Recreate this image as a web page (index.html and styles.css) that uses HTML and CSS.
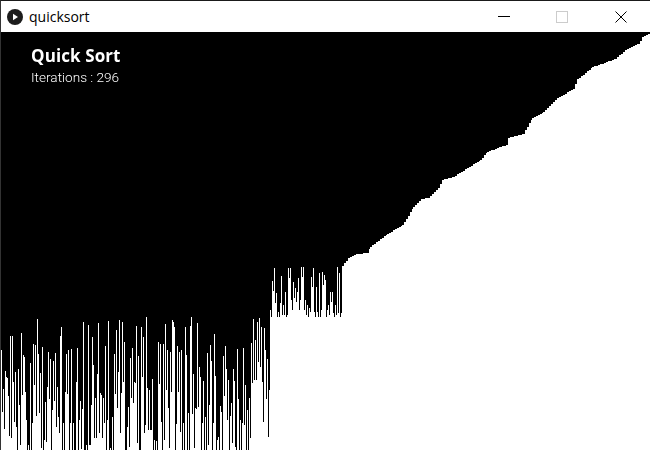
FILE: index.html
```html
<!DOCTYPE html>
<html lang="en">
<head>
    <meta charset="UTF-8">
    <title>quicksort</title>
    <link rel="stylesheet" href="styles.css">
</head>
<body>
    <div class="window">
        <div class="titlebar">
            <svg class="app-icon" width="16" height="16" viewBox="0 0 16 16">
                <circle cx="8" cy="8" r="8" fill="#1c1c1c"/>
                <path d="M6 4.8 L11 8 L6 11.2 Z" fill="#fff"/>
            </svg>
            <span class="title">quicksort</span>
            <div class="controls">
                <div class="control">
                    <svg width="12" height="12" viewBox="0 0 12 12"><path d="M0 5.5 H12" stroke="#000" fill="none"/></svg>
                </div>
                <div class="control control-max">
                    <svg width="12" height="12" viewBox="0 0 12 12"><rect x="0.5" y="0.5" width="11" height="11" stroke="#ccc" fill="none"/></svg>
                </div>
                <div class="control">
                    <svg width="12" height="12" viewBox="0 0 12 12"><path d="M0.5 0.5 L11.5 11.5 M11.5 0.5 L0.5 11.5" stroke="#000" fill="none"/></svg>
                </div>
            </div>
        </div>
        <div class="stage">
            <canvas id="sketch" width="649" height="418"></canvas>
            <div class="info">
                <div class="info-title">Quick Sort</div>
                <div class="info-count">Iterations : 296</div>
            </div>
        </div>
    </div>
    <script src="sketch.js"></script>
</body>
</html>
```

FILE: styles.css
```css
body {
    margin: 0;
    background-color: #fff;
    font-family: "Open Sans", "Noto Sans", sans-serif;
    overflow: hidden;
}
.window {
    width: 649px;
    height: 449px;
    border-top: 1px solid #1a1a1a;
    border-left: 1px solid #333;
    display: flex;
    flex-direction: column;
}
.titlebar {
    height: 31px;
    display: flex;
    align-items: center;
    background-color: #fff;
    padding-left: 6px;
}
.app-icon {
    margin-right: 6px;
}
.title {
    font-size: 14px;
    color: #000;
}
.controls {
    margin-left: auto;
    display: flex;
}
.control {
    width: 58px;
    height: 31px;
    display: flex;
    align-items: center;
    justify-content: center;
}
.control-max {
    margin-right: 1px;
}
.stage {
    position: relative;
    height: 418px;
}
#sketch {
    display: block;
}
.info {
    position: absolute;
    top: 13px;
    left: 30px;
    color: #fff;
}
.info-title {
    font-size: 17px;
    font-weight: bold;
    letter-spacing: 0.1px;
    line-height: 21px;
}
.info-count {
    font-family: Roboto, sans-serif;
    font-size: 13.6px;
    font-weight: 300;
    line-height: 23px;
}
```

FILE: sketch.js
```js
// bars read off the sort state: [x, top] pairs, x and top in window pixels / 3
const left = [[3,120],[6,305],[9,237],[15,183],[18,200],[21,203],[24,258],[30,78],[33,383],[36,78],[40,215],[44,186],[48,350],[54,178],[58,285],[63,69],[68,135],[71,140],[75,245],[78,330],[84,405],[90,160],[96,340],[100,102],[104,105],[108,318],[112,27],[115,132],[119,190],[123,415],[127,112],[132,390],[136,275],[140,232],[145,126],[150,148],[155,300],[158,192],[160,153],[166,128],[170,232],[174,322],[178,368],[181,78],[184,50],[190,340],[194,247],[198,132],[205,120],[210,340],[213,118],[220,340],[228,215],[232,113],[238,330],[241,272],[245,296],[250,36],[258,405],[265,45],[272,285],[275,80],[280,165],[284,265],[290,192],[295,40],[300,250],[304,255],[308,265],[312,340],[316,108],[320,330],[325,33],[330,415],[337,320],[342,132],[347,60],[350,295],[354,185],[358,30],[362,250],[367,36],[373,96],[380,350],[384,290],[390,145]];
const middle = [[0,145],[6,115],[10,280],[12,215],[15,220],[18,48],[22,400],[25,138],[30,420],[33,52],[38,82],[42,368],[45,345],[48,22],[52,235],[58,240],[65,208],[72,390],[78,393],[85,97],[90,102],[94,335],[98,103],[103,390],[106,42],[110,120],[115,295],[120,125],[126,30],[130,35],[133,52],[138,342],[142,108],[146,125],[150,365],[154,120],[160,340],[164,52],[168,135],[174,310],[181,48],[184,22],[190,192],[195,295],[198,298],[202,40],[206,170],[211,200],[215,340],[219,212],[225,320],[232,128],[236,285],[240,105],[244,152],[248,340],[252,72],[256,197],[260,390],[265,380],[270,288],[274,305],[278,138],[284,108],[288,178],[294,210],[300,318],[304,280],[308,178],[312,212],[316,410],[320,118],[325,268],[330,330],[335,340],[340,113],[346,225],[352,300],[358,265],[364,98],[368,28],[374,90],[380,35],[386,25],[392,50],[396,215],[402,55],[406,120],[410,148],[414,380],[418,240]];
const plateau = [[30,180],[36,92],[42,55],[48,130],[54,185],[60,160],[63,78],[70,165],[75,125],[80,195],[84,55],[90,55],[94,150],[98,95],[104,115],[110,125],[115,85],[120,150],[124,50],[130,50],[136,150],[140,165],[146,175],[151,185],[154,80],[158,55],[163,185],[168,110],[172,185],[177,70],[182,180],[187,65],[192,75],[196,90],[200,180],[205,165],[210,125],[215,125],[220,190],[225,165],[230,50],[234,190],[238,70],[242,190]];
// sorted part, outline as [x, y]
const sorted = [[342,266],[348,258],[357,254],[367,253],[370,247],[387,234],[402,225],[408,216],[413,207],[421,199],[428,198],[438,188],[442,180],[453,177],[467,168],[480,160],[487,152],[500,147],[507,145],[508,138],[523,134],[532,118],[543,112],[557,98],[573,89],[577,79],[585,73],[592,67],[615,59],[625,50],[638,44],[642,37],[650,33]];

const ctx = document.getElementById('sketch').getContext('2d');
ctx.translate(-1, -32);
ctx.fillStyle = '#000';
ctx.fillRect(0, 0, 650, 450);
ctx.fillStyle = '#fff';

// a bar is 1px wide; the rest up to the next one sits deeper than either
function drawBars(bars, originX, originY, endX, depth) {
    bars.forEach((bar, i) => {
        const x = originX + Math.round(bar[0] / 3);
        const hasNext = i + 1 < bars.length;
        const next = hasNext ? originX + Math.round(bars[i + 1][0] / 3) : endX;
        const top = originY + Math.round(bar[1] / 3);
        ctx.fillRect(x, top, 1, 450 - top);
        if (next - x > 1) {
            const nextTop = hasNext ? originY + Math.round(bars[i + 1][1] / 3) : top;
            const low = Math.max(top, nextTop) + depth;
            ctx.fillRect(x + 1, low, next - x - 1, 450 - low);
        }
    });
}

drawBars(left, 0, 310, 130, 40);
drawBars(middle, 130, 310, 270, 40);
ctx.fillRect(270, 317, 72, 133);
drawBars(plateau, 260, 250, 342, 10);

for (let i = 0; i + 1 < sorted.length; i++) {
    const a = sorted[i];
    const b = sorted[i + 1];
    for (let x = a[0]; x < b[0]; x += 2) {
        const top = Math.round(a[1] + (b[1] - a[1]) * (x - a[0]) / (b[0] - a[0]));
        ctx.fillRect(x, top, 2, 450 - top);
    }
}
```
